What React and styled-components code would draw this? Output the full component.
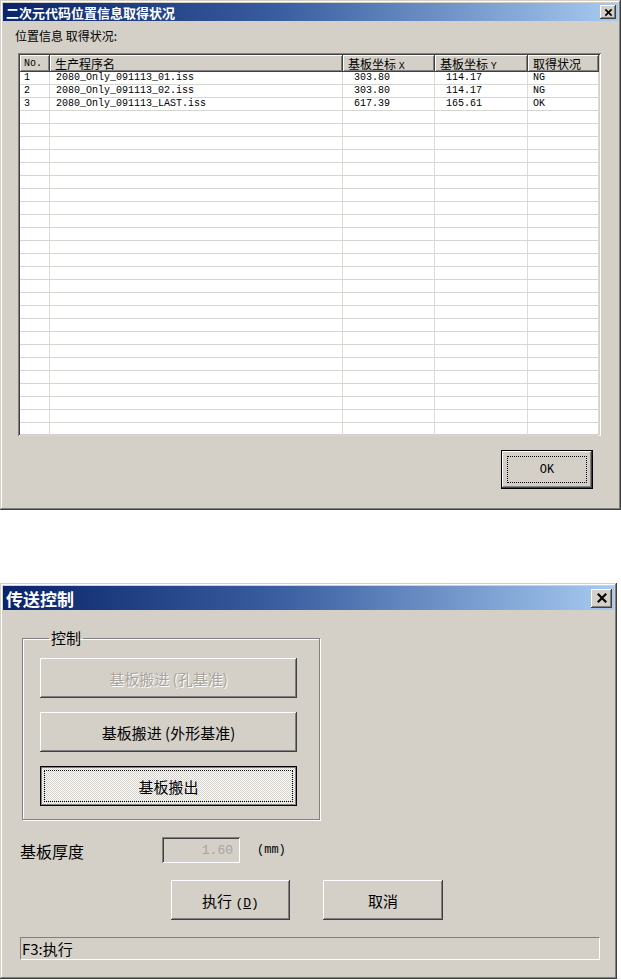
import React from "react";
import styled, { createGlobalStyle, css } from "styled-components";

const cjk = `"Noto Sans CJK SC", "Noto Sans", sans-serif`;
const mono = `"Liberation Mono", "Noto Sans CJK SC", monospace`;

const GlobalStyle = createGlobalStyle`
  html, body {
    margin: 0;
    padding: 0;
    background: #ffffff;
  }
  body {
    font-family: ${cjk};
    color: #000000;
  }
`;

const raised = css`
  box-shadow: inset -1px -1px #404040, inset 1px 1px #ffffff,
    inset -2px -2px #808080, inset 2px 2px #d4d0c8;
`;

const sunken = css`
  box-shadow: inset 1px 1px #808080, inset -1px -1px #ffffff,
    inset 2px 2px #404040, inset -2px -2px #d4d0c8;
`;

const rows = [
  { no: "1", name: "2080_Only_091113_01.iss", x: "303.80", y: "114.17", state: "NG" },
  { no: "2", name: "2080_Only_091113_02.iss", x: "303.80", y: "114.17", state: "NG" },
  { no: "3", name: "2080_Only_091113_LAST.iss", x: "617.39", y: "165.61", state: "OK" },
];

const emptyRows = Array.from({ length: 26 }, (_, i) => i);

const CloseIcon = ({ size }) => (
  <svg width={size} height={size} viewBox="0 0 10 10">
    <path d="M1.5 1.5 L8.5 8.5 M8.5 1.5 L1.5 8.5" stroke="#000" strokeWidth="1.8" />
  </svg>
);

const App = () => {
  return (
    <Page>
      <GlobalStyle />

      <Window $w={621} $h={510}>
        <TitleBar $h={18} $fs={13}>
          <span>二次元代码位置信息取得状况</span>
          <CloseButton $w={16} $h={14}>
            <CloseIcon size={9} />
          </CloseButton>
        </TitleBar>
        <Body1>
          <InfoLabel>位置信息 取得状况:</InfoLabel>
          <Table>
            <HeadRow>
              <HeadCell $mono>No.</HeadCell>
              <HeadCell>生产程序名</HeadCell>
              <HeadCell>
                基板坐标 <Mono>X</Mono>
              </HeadCell>
              <HeadCell>
                基板坐标 <Mono>Y</Mono>
              </HeadCell>
              <HeadCell>取得状况</HeadCell>
            </HeadRow>
            {rows.map((r) => (
              <Row key={r.no}>
                <Cell $pl={4}>{r.no}</Cell>
                <Cell $pl={6}>{r.name}</Cell>
                <Cell $pl={11}>{r.x}</Cell>
                <Cell $pl={11}>{r.y}</Cell>
                <Cell $pl={5}>{r.state}</Cell>
              </Row>
            ))}
            {emptyRows.map((i) => (
              <Row key={`e${i}`}>
                <Cell />
                <Cell />
                <Cell />
                <Cell />
                <Cell />
              </Row>
            ))}
          </Table>
          <Footer1>
            <DefaultButton>
              <Face $focus>
                <span>OK</span>
              </Face>
            </DefaultButton>
          </Footer1>
        </Body1>
      </Window>

      <Window $w={617} $h={396} $mt={73}>
        <TitleBar $h={24} $fs={17}>
          <span>传送控制</span>
          <CloseButton $w={21} $h={19}>
            <CloseIcon size={12} />
          </CloseButton>
        </TitleBar>
        <Body2>
          <Group>
            <Legend>控制</Legend>
            <PushButton $w={257} disabled>
              <Face>
                <span>基板搬进 (孔基准)</span>
              </Face>
            </PushButton>
            <PushButton $w={257}>
              <Face>
                <span>基板搬进 (外形基准)</span>
              </Face>
            </PushButton>
            <PushButton $w={257} $pressed>
              <Face $focus>
                <span>基板搬出</span>
              </Face>
            </PushButton>
          </Group>

          <ThicknessRow>
            <FieldLabel>基板厚度</FieldLabel>
            <ValueBox>1.60</ValueBox>
            <Unit>(mm)</Unit>
          </ThicknessRow>

          <ActionRow>
            <PushButton $w={119}>
              <Face>
                <span>
                  执行 <Mono $u>(</Mono>
                  <Mono $u $under>D</Mono>
                  <Mono $u>)</Mono>
                </span>
              </Face>
            </PushButton>
            <PushButton $w={120}>
              <Face>
                <span>取消</span>
              </Face>
            </PushButton>
          </ActionRow>

          <StatusBar>F3:执行</StatusBar>
        </Body2>
      </Window>
    </Page>
  );
};

export default App;

const Page = styled.div`
  display: flex;
  flex-direction: column;
  width: 621px;
`;

const Window = styled.section`
  box-sizing: border-box;
  width: ${(p) => p.$w}px;
  height: ${(p) => p.$h}px;
  margin-top: ${(p) => p.$mt || 0}px;
  padding: 3px;
  display: flex;
  flex-direction: column;
  background: #d4d0c8;
  box-shadow: inset -1px -1px #404040, inset 1px 1px #d4d0c8,
    inset -2px -2px #808080, inset 2px 2px #ffffff;
`;

const TitleBar = styled.div`
  flex: none;
  height: ${(p) => p.$h}px;
  display: flex;
  align-items: center;
  justify-content: space-between;
  padding: 0 2px 0 3px;
  background: linear-gradient(to right, #0a246a 0%, #3a5ea0 45%, #a6caf0 100%);
  color: #ffffff;
  font-family: ${cjk};
  font-weight: 700;
  font-size: ${(p) => p.$fs}px;
  line-height: 1;
  white-space: nowrap;
`;

const CloseButton = styled.div`
  box-sizing: border-box;
  width: ${(p) => p.$w}px;
  height: ${(p) => p.$h}px;
  display: flex;
  align-items: center;
  justify-content: center;
  background: #d4d0c8;
  ${raised}
`;

const Body1 = styled.div`
  flex: 1;
  display: flex;
  flex-direction: column;
  padding: 0 0 0 12px;
`;

const InfoLabel = styled.div`
  margin-top: 8px;
  height: 14px;
  font-size: 12px;
  line-height: 14px;
`;

const Table = styled.div`
  box-sizing: border-box;
  margin: 10px 0 0 3px;
  width: 583px;
  height: 383px;
  padding: 2px;
  background: #ffffff;
  overflow: hidden;
  ${sunken}
`;

const grid = css`
  display: grid;
  grid-template-columns: 30px 293px 92px 93px 71px;
`;

const HeadRow = styled.div`
  ${grid}
  height: 17px;
`;

const HeadCell = styled.div`
  box-sizing: border-box;
  padding-left: ${(p) => (p.$mono ? 4 : 5)}px;
  background: #d4d0c8;
  font-family: ${(p) => (p.$mono ? mono : cjk)};
  font-size: ${(p) => (p.$mono ? 10 : 12)}px;
  line-height: 17px;
  white-space: nowrap;
  overflow: hidden;
  ${raised}
`;

const Row = styled.div`
  ${grid}
  box-sizing: border-box;
  height: 13px;
  border-bottom: 1px solid #d6d6d0;
`;

const Cell = styled.div`
  box-sizing: border-box;
  padding-left: ${(p) => p.$pl || 0}px;
  border-right: 1px solid #dcdcd4;
  font-family: ${mono};
  font-size: 10px;
  line-height: 12px;
  white-space: nowrap;
  overflow: hidden;
`;

const Mono = styled.span`
  font-family: ${mono};
  font-size: ${(p) => (p.$u ? "13px" : "10px")};
  text-decoration: ${(p) => (p.$under ? "underline" : "none")};
`;

const Footer1 = styled.div`
  display: flex;
  justify-content: flex-end;
  padding: 14px 25px 0 0;
`;

const Face = styled.span`
  flex: 1;
  align-self: stretch;
  display: flex;
  align-items: center;
  justify-content: center;
  border: 1px dotted ${(p) => (p.$focus ? "#000000" : "transparent")};
  white-space: nowrap;
`;

const DefaultButton = styled.div`
  box-sizing: border-box;
  width: 92px;
  height: 39px;
  display: flex;
  padding: 5px;
  background: #d4d0c8;
  border: 1px solid #000000;
  font-family: ${mono};
  font-size: 12px;
  box-shadow: inset -1px -1px #404040, inset 1px 1px #ffffff,
    inset -2px -2px #808080, inset 2px 2px #d4d0c8;
`;

const Body2 = styled.div`
  flex: 1;
  display: flex;
  flex-direction: column;
  padding: 0 0 0 17px;
`;

const Group = styled.fieldset`
  box-sizing: border-box;
  margin: 18px 0 0 2px;
  width: 298px;
  height: 192px;
  padding: 10px 0 0 17px;
  display: flex;
  flex-direction: column;
  gap: 14px;
  border: 1px solid #808080;
  box-shadow: inset 1px 1px #ffffff, 1px 1px #ffffff;
`;

const Legend = styled.legend`
  margin-left: 9px;
  padding: 0 2px;
  font-size: 15px;
  line-height: 20px;
`;

const PushButton = styled.button`
  box-sizing: border-box;
  width: ${(p) => p.$w}px;
  height: 40px;
  display: flex;
  padding: 4px;
  border: none;
  background: #d4d0c8;
  font-family: ${cjk};
  font-size: 15px;
  color: ${(p) => (p.disabled ? "#a8a49c" : "#000000")};
  text-shadow: ${(p) => (p.disabled ? "1px 1px #ffffff" : "none")};
  ${raised}

  ${(p) =>
    p.$pressed &&
    css`
      border: 1px solid #000000;
      padding: 3px;
      background: repeating-conic-gradient(#ffffff 0 25%, #d4d0c8 0 50%) 0 0 / 2px 2px;
      box-shadow: inset 1px 1px #808080, inset -1px -1px #808080;
    `}
`;

const ThicknessRow = styled.div`
  display: flex;
  align-items: center;
  margin-top: 17px;
  height: 26px;
`;

const FieldLabel = styled.div`
  width: 142px;
  font-size: 16px;
  line-height: 1;
  padding-top: 2px;
`;

const ValueBox = styled.div`
  box-sizing: border-box;
  width: 78px;
  height: 26px;
  display: flex;
  align-items: center;
  justify-content: flex-end;
  padding-right: 7px;
  background: #d4d0c8;
  color: #a8a49c;
  font-family: ${mono};
  font-size: 13px;
  ${sunken}
`;

const Unit = styled.div`
  margin-left: 17px;
  font-family: ${mono};
  font-size: 12px;
`;

const ActionRow = styled.div`
  display: flex;
  gap: 33px;
  margin: 17px 0 0 151px;
`;

const StatusBar = styled.div`
  box-sizing: border-box;
  margin-top: 17px;
  width: 580px;
  height: 23px;
  display: flex;
  align-items: center;
  padding-left: 1px;
  font-size: 15px;
  border: 1px solid;
  border-color: #808080 #ffffff #ffffff #808080;
`;
